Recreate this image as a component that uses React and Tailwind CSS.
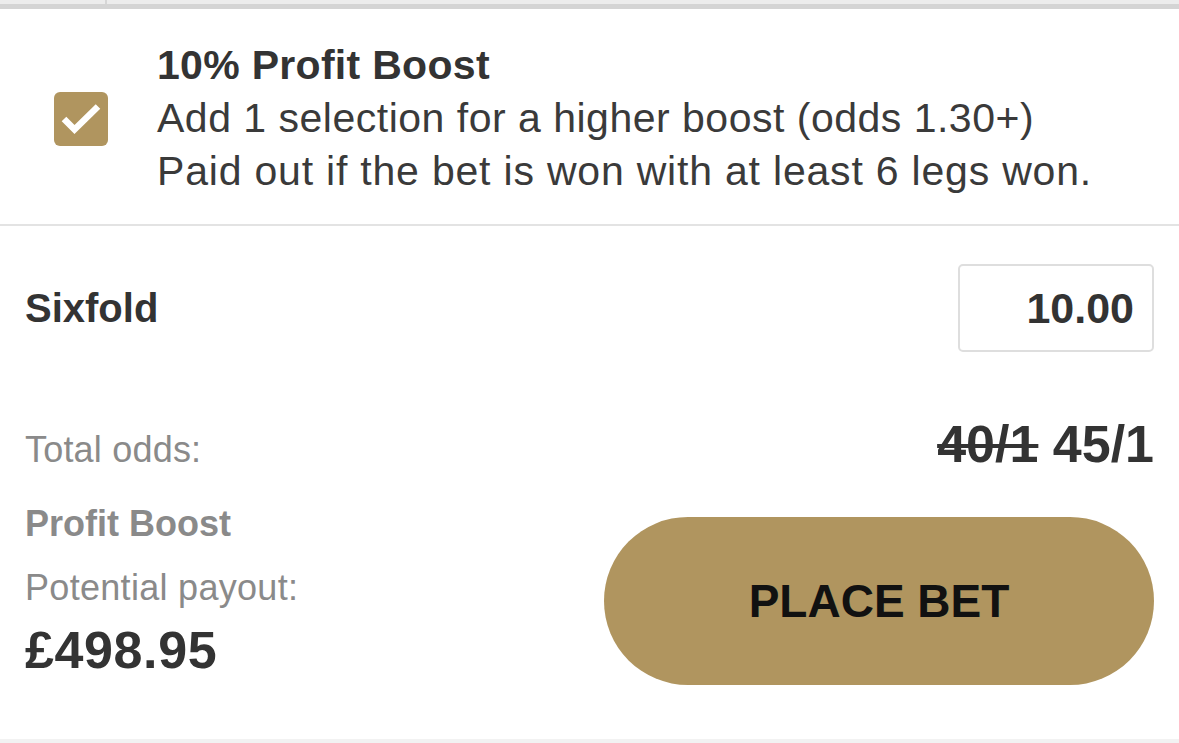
import React from "react";

export default function App() {
  return (
    <div
      className="w-[1179px] h-[743px] bg-white overflow-hidden flex flex-col text-[#333333]"
      style={{ fontFamily: '"Liberation Sans", Arial, sans-serif' }}
    >
      {/* top bar remnants */}
      <div className="h-[4px] bg-[#ececec] flex">
        <div className="w-[105px]" />
        <div className="w-[2px] bg-[#d6d6d6]" />
      </div>
      <div className="h-[5px] bg-[#d4d4d4]" />

      {/* boost section */}
      <div className="flex items-center pl-[54px] pt-[30px] pb-[26px] border-b-2 border-[#e3e3e3]">
        <div className="w-[54px] h-[54px] rounded-[6px] bg-[#b0955f] flex items-center justify-center shrink-0">
          <svg width="54" height="54" viewBox="0 0 54 54" fill="none">
            <path d="M10 27 L20.5 37.5 L44 14.5" stroke="#ffffff" strokeWidth="6.5" strokeLinecap="butt" strokeLinejoin="miter" />
          </svg>
        </div>
        <div className="ml-[49px] flex flex-col text-[41px] leading-[53px]">
          <div className="font-bold text-[#333333] tracking-[0.3px]">10% Profit Boost</div>
          <div className="text-[#3a3a3a] tracking-[0.5px]">Add 1 selection for a higher boost (odds 1.30+)</div>
          <div className="text-[#3a3a3a] tracking-[0.8px]">Paid out if the bet is won with at least 6 legs won.</div>
        </div>
      </div>

      {/* bet section */}
      <div className="flex-1 flex flex-col px-[25px] pt-[38px]">
        <div className="flex justify-between items-center">
          <div className="text-[40px] font-bold leading-[48px]">Sixfold</div>
          <div className="w-[196px] h-[88px] border-2 border-[#dedede] rounded-[5px] flex items-center justify-end pr-[18px]">
            <span className="text-[43px] font-bold leading-none">10.00</span>
          </div>
        </div>

        <div className="flex justify-between items-baseline mt-[64px]">
          <div className="text-[36px] leading-[44px] text-[#8a8a8a] tracking-[0.2px]">Total odds:</div>
          <div className="text-[52px] leading-[56px] font-bold">
            <span className="line-through decoration-[4px]">40/1</span> 45/1
          </div>
        </div>

        <div className="flex justify-between items-start mt-[30px]">
          <div className="flex flex-col">
            <div className="text-[36px] leading-[44px] font-bold text-[#8a8a8a]">Profit Boost</div>
            <div className="text-[36px] leading-[44px] text-[#8a8a8a] mt-[20px] tracking-[0.3px]">Potential payout:</div>
            <div className="text-[52px] leading-[56px] font-bold mt-[12px] tracking-[0.6px]">£498.95</div>
          </div>
          <button className="mt-[15px] w-[550px] h-[168px] rounded-full bg-[#b0955f] flex items-center justify-center">
            <span className="text-[46px] font-bold text-[#111111] leading-none">PLACE BET</span>
          </button>
        </div>
      </div>
      <div className="h-[4px] bg-[#f2f2f2]" />
    </div>
  );
}
